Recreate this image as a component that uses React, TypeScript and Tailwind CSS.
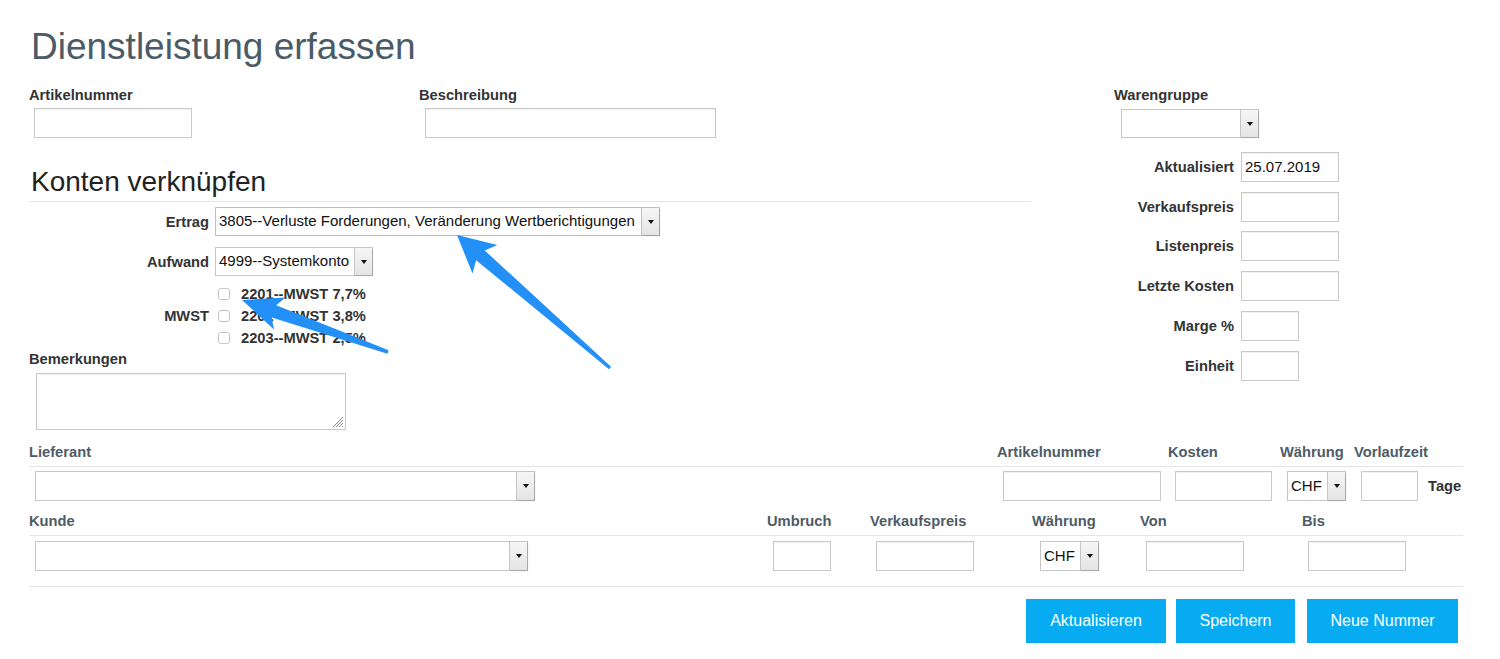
import React from "react";

type Pt = [number, number];

function arrowPoints(
  tip: Pt,
  tail: Pt,
  headLen: number,
  headHalf: number,
  notchLen: number,
  notchHalf: number,
  tailHalf: number
): string {
  const dx = tail[0] - tip[0];
  const dy = tail[1] - tip[1];
  const len = Math.hypot(dx, dy);
  const ux = dx / len;
  const uy = dy / len;
  const px = -uy;
  const py = ux;
  const pts: Pt[] = [
    tip,
    [tip[0] + ux * headLen + px * headHalf, tip[1] + uy * headLen + py * headHalf],
    [tip[0] + ux * notchLen + px * notchHalf, tip[1] + uy * notchLen + py * notchHalf],
    [tail[0] + px * tailHalf, tail[1] + py * tailHalf],
    [tail[0] - px * tailHalf, tail[1] - py * tailHalf],
    [tip[0] + ux * notchLen - px * notchHalf, tip[1] + uy * notchLen - py * notchHalf],
    [tip[0] + ux * headLen - px * headHalf, tip[1] + uy * headLen - py * headHalf],
  ];
  return pts.map((p) => `${p[0].toFixed(1)},${p[1].toFixed(1)}`).join(" ");
}

function Caret() {
  return (
    <span className="block w-0 h-0 border-l-[3px] border-r-[3px] border-t-[4px] border-l-transparent border-r-transparent border-t-[#111]" />
  );
}

function Select({
  className,
  value,
  focused,
}: {
  className: string;
  value?: string;
  focused?: boolean;
}) {
  return (
    <div
      className={`flex bg-white border ${
        focused ? "border-[#8fcdf1]" : "border-[#c6c6c6]"
      } ${className}`}
    >
      <div className="flex-1 flex items-center pl-[3px] text-[15px] text-[#111] whitespace-nowrap overflow-hidden">
        {value}
      </div>
      <div
        className={`w-[18px] flex items-center justify-center border-l ${
          focused ? "border-[#8fcdf1]" : "border-[#c6c6c6]"
        } bg-gradient-to-b from-[#f6f6f6] to-[#e4e4e4] shadow-[1px_1px_1px_rgba(0,0,0,0.15)]`}
      >
        <Caret />
      </div>
    </div>
  );
}

function Input({ className, value }: { className: string; value?: string }) {
  return (
    <div
      className={`bg-white border border-[#c9c9c9] shadow-[inset_0_1px_1px_rgba(0,0,0,0.06)] flex items-center pl-[3px] text-[15px] text-[#111] ${className}`}
    >
      {value}
    </div>
  );
}

function Checkbox() {
  return (
    <span className="block w-[12px] h-[12px] rounded-[3px] border border-[#c4c4c4] bg-white" />
  );
}

function RightRow({
  label,
  inputW,
  value,
  mt,
}: {
  label: string;
  inputW: string;
  value?: string;
  mt: string;
}) {
  return (
    <div className={`flex items-center ${mt}`}>
      <div className="w-[120px] text-right font-bold text-[14.7px] text-[#333] leading-[20px]">
        {label}
      </div>
      <Input className={`ml-[7px] h-[30px] ${inputW}`} value={value} />
    </div>
  );
}

export default function App() {
  const labelCls = "font-bold text-[14.7px] text-[#333] leading-[20px]";
  const headCls = "font-bold text-[14.7px] text-[#4d5b66] leading-[20px] whitespace-nowrap";

  return (
    <div className="relative w-[1500px] h-[659px] bg-white overflow-hidden font-['Liberation_Sans',Arial,sans-serif]">
      <div className="pl-[29px]">
        {/* Title */}
        <h1 className="pt-[25px] ml-[2px] text-[37px] leading-[43px] text-[#4a5a66] font-normal">
          Dienstleistung erfassen
        </h1>

        {/* Top region */}
        <div className="flex mt-[17px]">
          {/* Left column */}
          <div className="w-[1002px]">
            <div className="flex">
              <div className="w-[390px]">
                <div className={labelCls}>Artikelnummer</div>
                <Input className="ml-[5px] mt-[3px] w-[158px] h-[30px]" />
              </div>
              <div>
                <div className={labelCls}>Beschreibung</div>
                <Input className="ml-[6px] mt-[3px] w-[291px] h-[30px]" />
              </div>
            </div>

            <h2 className="mt-[27px] ml-[2px] text-[28px] leading-[33px] text-[#222] font-normal">
              Konten verknüpfen
            </h2>
            <div className="mt-[3px] border-b border-[#e2e6e9]" />

            <div className="flex items-center mt-[5px]">
              <div className={`w-[180px] text-right ${labelCls}`}>Ertrag</div>
              <Select
                className="ml-[6px] w-[445px] h-[29px]"
                value="3805--Verluste Forderungen, Veränderung Wertberichtigungen"
                focused
              />
            </div>
            <div className="flex items-center mt-[11px]">
              <div className={`w-[180px] text-right ${labelCls}`}>Aufwand</div>
              <Select className="ml-[6px] w-[158px] h-[29px]" value="4999--Systemkonto" />
            </div>

            <div className="flex items-center mt-[7px]">
              <div className={`w-[180px] text-right ${labelCls}`}>MWST</div>
              <div className="ml-[9px]">
                {["2201--MWST 7,7%", "2202--MWST 3,8%", "2203--MWST 2,5%"].map((t) => (
                  <div key={t} className="flex items-center h-[22px]">
                    <Checkbox />
                    <span className={`ml-[11px] ${labelCls}`}>{t}</span>
                  </div>
                ))}
              </div>
            </div>

            <div className={labelCls}>Bemerkungen</div>
            <div className="relative ml-[7px] mt-[4px] w-[310px] h-[57px] bg-white border border-[#c9c9c9] shadow-[inset_0_1px_1px_rgba(0,0,0,0.06)]">
              <svg
                className="absolute right-[1px] bottom-[1px]"
                width="12"
                height="12"
                viewBox="0 0 12 12"
              >
                <path
                  d="M11 1 L1 11 M11 4 L4 11 M11 7 L7 11 M11 10 L10 11"
                  stroke="#888"
                  strokeWidth="1"
                />
              </svg>
            </div>
          </div>

          {/* Right column */}
          <div className="ml-[83px]">
            <div className={labelCls}>Warengruppe</div>
            <Select className="ml-[7px] mt-[4px] w-[138px] h-[29px]" />
            <RightRow label="Aktualisiert" inputW="w-[98px]" value="25.07.2019" mt="mt-[14px]" />
            <RightRow label="Verkaufspreis" inputW="w-[98px]" mt="mt-[10px]" />
            <RightRow label="Listenpreis" inputW="w-[98px]" mt="mt-[9px]" />
            <RightRow label="Letzte Kosten" inputW="w-[98px]" mt="mt-[10px]" />
            <RightRow label="Marge %" inputW="w-[58px]" mt="mt-[10px]" />
            <RightRow label="Einheit" inputW="w-[58px]" mt="mt-[10px]" />
          </div>
        </div>

        {/* Lieferant section */}
        <div className="w-[1434px] mt-[12px]">
          <div className="flex pb-[4px] border-b border-[#e2e6e9]">
            <div className={`w-[968px] ${headCls}`}>Lieferant</div>
            <div className={`w-[171px] ${headCls}`}>Artikelnummer</div>
            <div className={`w-[112px] ${headCls}`}>Kosten</div>
            <div className={`w-[74px] ${headCls}`}>Währung</div>
            <div className={headCls}>Vorlaufzeit</div>
          </div>
          <div className="flex items-center mt-[4px]">
            <div className="w-[968px]">
              <Select className="ml-[6px] w-[500px] h-[30px]" />
            </div>
            <div className="w-[171px]">
              <Input className="ml-[6px] w-[158px] h-[30px]" />
            </div>
            <div className="w-[112px]">
              <Input className="ml-[7px] w-[97px] h-[30px]" />
            </div>
            <div className="w-[74px]">
              <Select className="ml-[7px] w-[59px] h-[30px]" value="CHF" />
            </div>
            <div className="flex items-center">
              <Input className="ml-[7px] w-[57px] h-[30px]" />
              <span className={`ml-[10px] ${labelCls}`}>Tage</span>
            </div>
          </div>

          {/* Kunde section */}
          <div className="flex pb-[4px] border-b border-[#e2e6e9] mt-[10px]">
            <div className={`w-[738px] ${headCls}`}>Kunde</div>
            <div className={`w-[103px] ${headCls}`}>Umbruch</div>
            <div className={`w-[162px] ${headCls}`}>Verkaufspreis</div>
            <div className={`w-[108px] ${headCls}`}>Währung</div>
            <div className={`w-[162px] ${headCls}`}>Von</div>
            <div className={headCls}>Bis</div>
          </div>
          <div className="flex items-center mt-[5px]">
            <div className="w-[738px]">
              <Select className="ml-[6px] w-[493px] h-[30px]" />
            </div>
            <div className="w-[103px]">
              <Input className="ml-[6px] w-[58px] h-[30px]" />
            </div>
            <div className="w-[162px]">
              <Input className="ml-[6px] w-[98px] h-[30px]" />
            </div>
            <div className="w-[108px]">
              <Select className="ml-[8px] w-[59px] h-[30px]" value="CHF" />
            </div>
            <div className="w-[162px]">
              <Input className="ml-[6px] w-[98px] h-[30px]" />
            </div>
            <div>
              <Input className="ml-[6px] w-[98px] h-[30px]" />
            </div>
          </div>

          <div className="mt-[15px] border-b border-[#e2e6e9]" />

          <div className="flex justify-end pr-[5px] mt-[12px]">
            <button className="w-[140px] h-[44px] bg-[#06abf1] text-white text-[16px]">
              Aktualisieren
            </button>
            <button className="ml-[10px] w-[119px] h-[44px] bg-[#06abf1] text-white text-[16px]">
              Speichern
            </button>
            <button className="ml-[12px] w-[151px] h-[44px] bg-[#06abf1] text-white text-[16px]">
              Neue Nummer
            </button>
          </div>
        </div>
      </div>

      {/* Annotation arrows */}
      <svg
        className="absolute left-0 top-0 pointer-events-none"
        width="1500"
        height="659"
        viewBox="0 0 1500 659"
      >
        <polygon
          points={arrowPoints([457, 235], [610, 368], 37, 19, 31, 6.5, 1.6)}
          fill="#2290f6"
        />
        <polygon
          points={arrowPoints([242, 300], [388, 352], 40, 17, 34, 6.5, 1.8)}
          fill="#2290f6"
        />
      </svg>
    </div>
  );
}
